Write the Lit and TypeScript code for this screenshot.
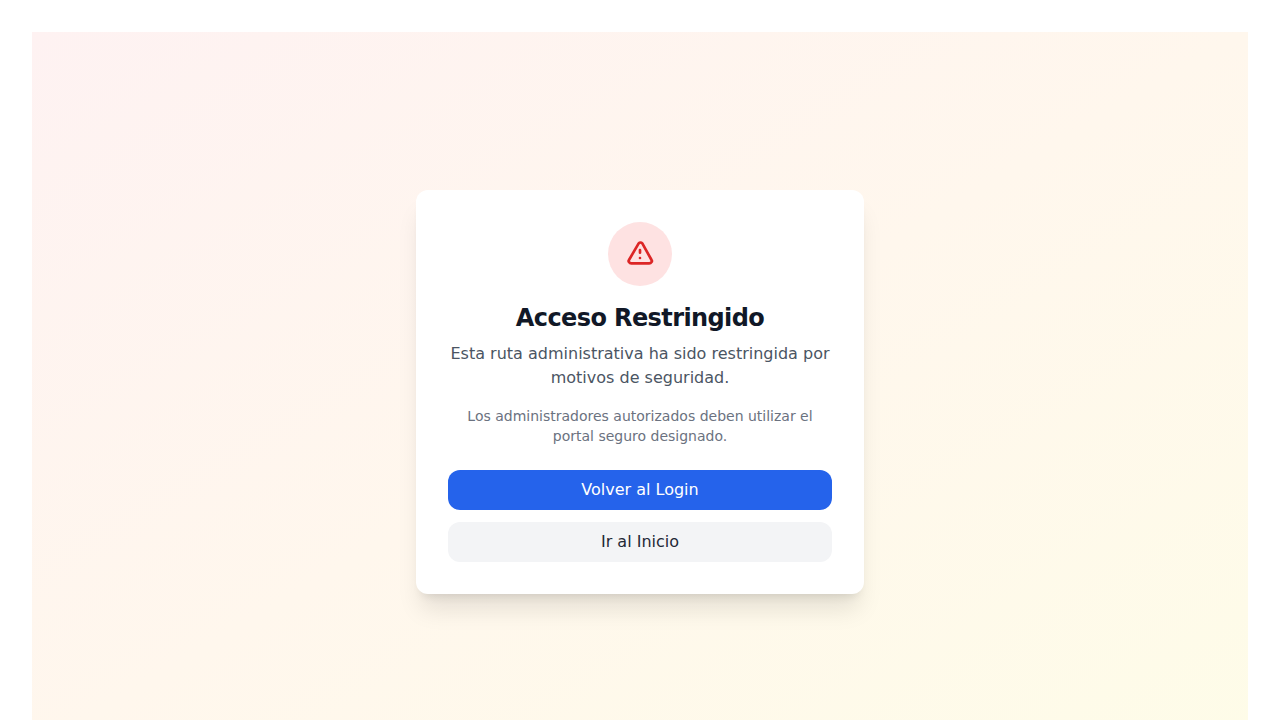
import { LitElement, html, css } from "lit";
import { customElement } from "lit/decorators.js";

@customElement("app-root")
export class AppRoot extends LitElement {
  static styles = css`
    :host {
      display: block;
      box-sizing: border-box;
      height: 100vh;
      overflow: hidden;
      padding: 32px;
      background: #fff;
      font-family: "DejaVu Sans", sans-serif;
      font-size: 16px;
      line-height: 24px;
    }
    .screen {
      box-sizing: border-box;
      min-height: 720px;
      padding: 16px;
      display: flex;
      align-items: center;
      justify-content: center;
      background: linear-gradient(to bottom right, #fef2f2, #fff7ed, #fefce8);
    }
    .card {
      box-sizing: border-box;
      width: 448px;
      padding: 32px;
      border-radius: 12px;
      background: #fff;
      text-align: center;
      box-shadow: 0 20px 25px -5px rgba(0, 0, 0, 0.1), 0 8px 10px -6px rgba(0, 0, 0, 0.1);
    }
    .badge {
      width: 64px;
      height: 64px;
      margin: 0 auto 16px;
      border-radius: 50%;
      background: #fee2e2;
      display: flex;
      align-items: center;
      justify-content: center;
      color: #dc2626;
    }
    h1 {
      margin: 0 0 8px;
      font-size: 24px;
      line-height: 32px;
      font-weight: 700;
      letter-spacing: -0.6px;
      color: #111827;
    }
    p {
      margin: 0;
    }
    .lead {
      color: #4b5563;
      margin-bottom: 16px;
    }
    .note {
      font-size: 14px;
      line-height: 20px;
      color: #6b7280;
      margin-bottom: 24px;
    }
    .actions {
      display: flex;
      flex-direction: column;
      gap: 12px;
    }
    button {
      height: 40px;
      padding: 0 16px;
      border: 0;
      border-radius: 12px;
      font: inherit;
      cursor: pointer;
    }
    .primary {
      background: #2563eb;
      color: #fff;
    }
    .secondary {
      background: #f3f4f6;
      color: #1f2937;
    }
  `;

  render() {
    return html`
      <main class="screen">
        <section class="card">
          <div class="badge">
            <svg width="32" height="32" viewBox="0 0 24 24" fill="none" stroke="currentColor"
              stroke-width="2" stroke-linecap="round" stroke-linejoin="round" aria-hidden="true">
              <path d="M12 9v2m0 4h.01m-6.938 4h13.856c1.54 0 2.502-1.667 1.732-2.5L13.732 4c-.77-.833-1.964-.833-2.732 0L3.732 16.5c-.77.833.192 2.5 1.732 2.5z" />
            </svg>
          </div>
          <h1>Acceso Restringido</h1>
          <p class="lead">Esta ruta administrativa ha sido restringida por motivos de seguridad.</p>
          <p class="note">Los administradores autorizados deben utilizar el portal seguro designado.</p>
          <div class="actions">
            <button class="primary">Volver al Login</button>
            <button class="secondary">Ir al Inicio</button>
          </div>
        </section>
      </main>
    `;
  }
}
